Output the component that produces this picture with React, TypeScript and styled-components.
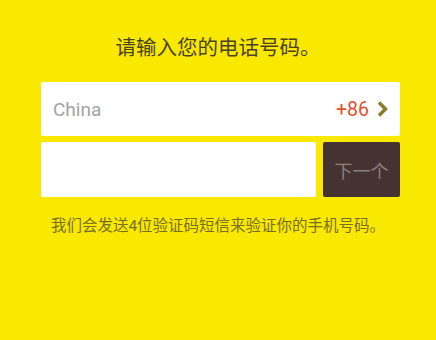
import React from "react";
import styled, { createGlobalStyle } from "styled-components";

const COLORS = {
  YELLOW: "#f9e800",
  TITLE: "#4b4320",
  HINT: "#7a6f1e",
  GREY: "#a3a3a3",
  RED: "#e2502c",
  CHEVRON: "#8a7a2c",
  BROWN: "#453331",
  BUTTON_TEXT: "#8c807d",
};

const GlobalStyle = createGlobalStyle`
  body {
    margin: 0;
    background-color: ${COLORS.YELLOW};
    font-family: "Roboto", "Noto Sans CJK SC", sans-serif;
  }
`;

const StyledPage = styled.main`
  display: flex;
  flex-direction: column;
  align-items: center;
  width: 436px;
  height: 340px;
  box-sizing: border-box;
  padding-top: 37px;
`;

const Title = styled.h1`
  margin: 0 0 22px;
  font-size: 20.5px;
  line-height: 23px;
  font-weight: 400;
  color: ${COLORS.TITLE};
`;

const Form = styled.div`
  display: flex;
  flex-direction: column;
  gap: 6px;
  width: 359px;
  margin-left: 5px;
`;

const Field = styled.div<{ $height: number }>`
  display: flex;
  align-items: center;
  flex: 1 1 auto;
  height: ${(p) => p.$height}px;
  box-sizing: border-box;
  padding: 0 12px 0 12px;
  background-color: #ffffff;
  border-radius: 2px;
`;

const Country = styled.span`
  flex: 1;
  font-size: 19px;
  color: ${COLORS.GREY};
`;

const Code = styled.span`
  font-size: 19.5px;
  color: ${COLORS.RED};
  margin-right: 8px;
`;

const Row = styled.div`
  display: flex;
  gap: 7px;
`;

const NextButton = styled.button`
  flex-shrink: 0;
  width: 77px;
  height: 55px;
  border: none;
  border-radius: 2px;
  background-color: ${COLORS.BROWN};
  color: ${COLORS.BUTTON_TEXT};
  font-family: "Noto Sans CJK SC", sans-serif;
  font-size: 18px;
  padding: 0;
`;

const Hint = styled.p`
  margin: 19px 0 0;
  font-size: 15.5px;
  line-height: 20px;
  color: ${COLORS.HINT};
`;

const Chevron = () => (
  <svg width="11" height="18" viewBox="0 0 11 18">
    <path
      d="M2 2.5 L8.5 9 L2 15.5"
      fill="none"
      stroke={COLORS.CHEVRON}
      strokeWidth="3.5"
    />
  </svg>
);

const App = () => {
  return (
    <>
      <GlobalStyle />
      <StyledPage>
        <Title>请输入您的电话号码。</Title>
        <Form>
          <Field $height={54}>
            <Country>China</Country>
            <Code>+86</Code>
            <Chevron />
          </Field>
          <Row>
            <Field $height={55} />
            <NextButton>下一个</NextButton>
          </Row>
        </Form>
        <Hint>我们会发送4位验证码短信来验证你的手机号码。</Hint>
      </StyledPage>
    </>
  );
};

export default App;
